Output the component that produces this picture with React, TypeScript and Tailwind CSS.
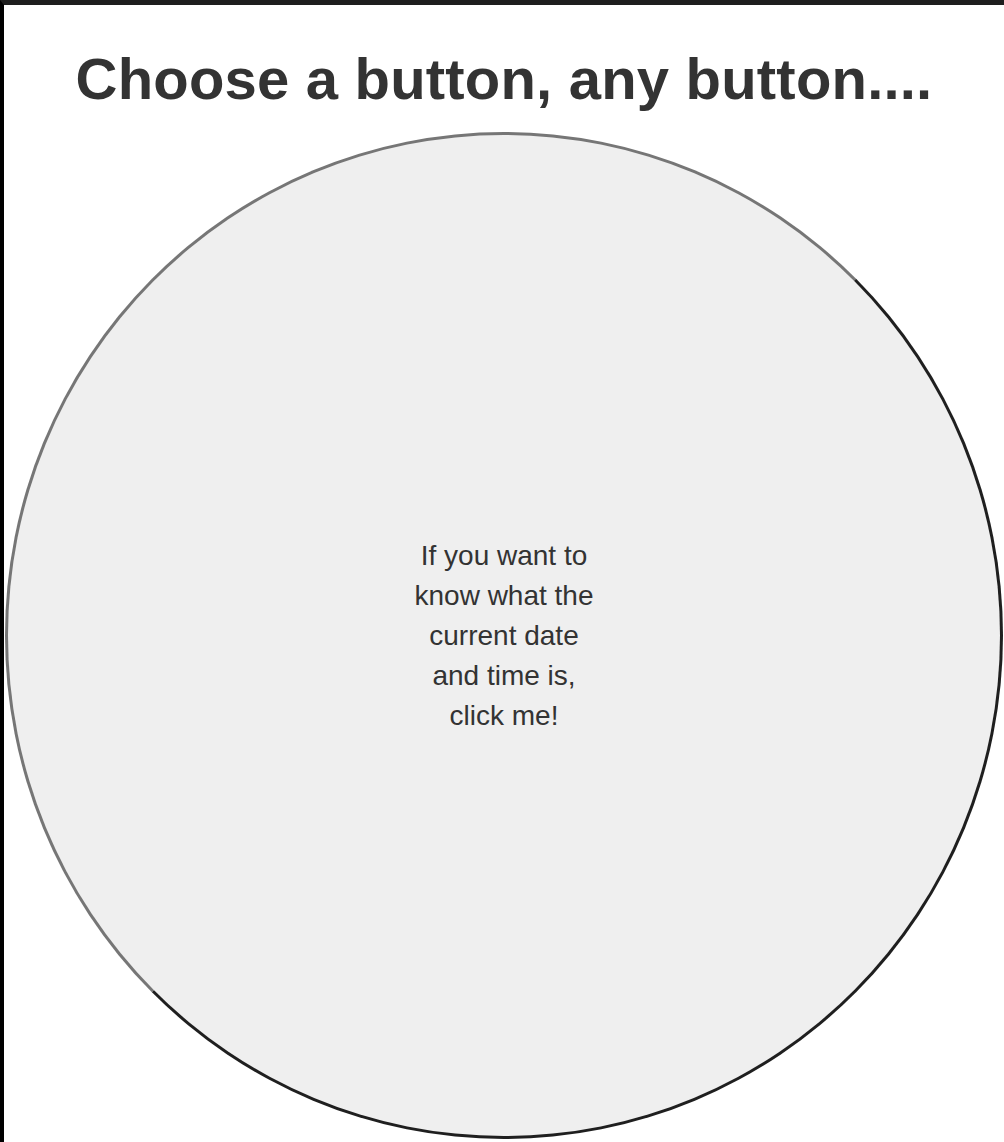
import React from "react";

export default function App() {
  return (
    <div
      className="w-[1004px] h-[1142px] overflow-hidden bg-white border-l-4 border-l-black border-t-[5px] border-t-[#1e1e1e] flex flex-col items-center"
      style={{ fontFamily: '"Liberation Sans", Arial, sans-serif' }}
    >
      <h1 className="mt-[44px] text-[58px] leading-[60px] font-bold text-[#333333] text-center whitespace-nowrap tracking-[0.2px]">
        Choose a button, any button....
      </h1>
      <button
        className="mt-[23px] shrink-0 w-[998px] h-[1007px] rounded-[50%] bg-[#efefef] border-[3px] border-solid border-t-[#767676] border-l-[#767676] border-r-[#1f1f1f] border-b-[#1f1f1f] flex items-center justify-center"
      >
        <span className="block w-[192px] text-[28px] leading-[40px] text-[#333333] text-center">
          If you want to know what the current date and time is, click me!
        </span>
      </button>
    </div>
  );
}
